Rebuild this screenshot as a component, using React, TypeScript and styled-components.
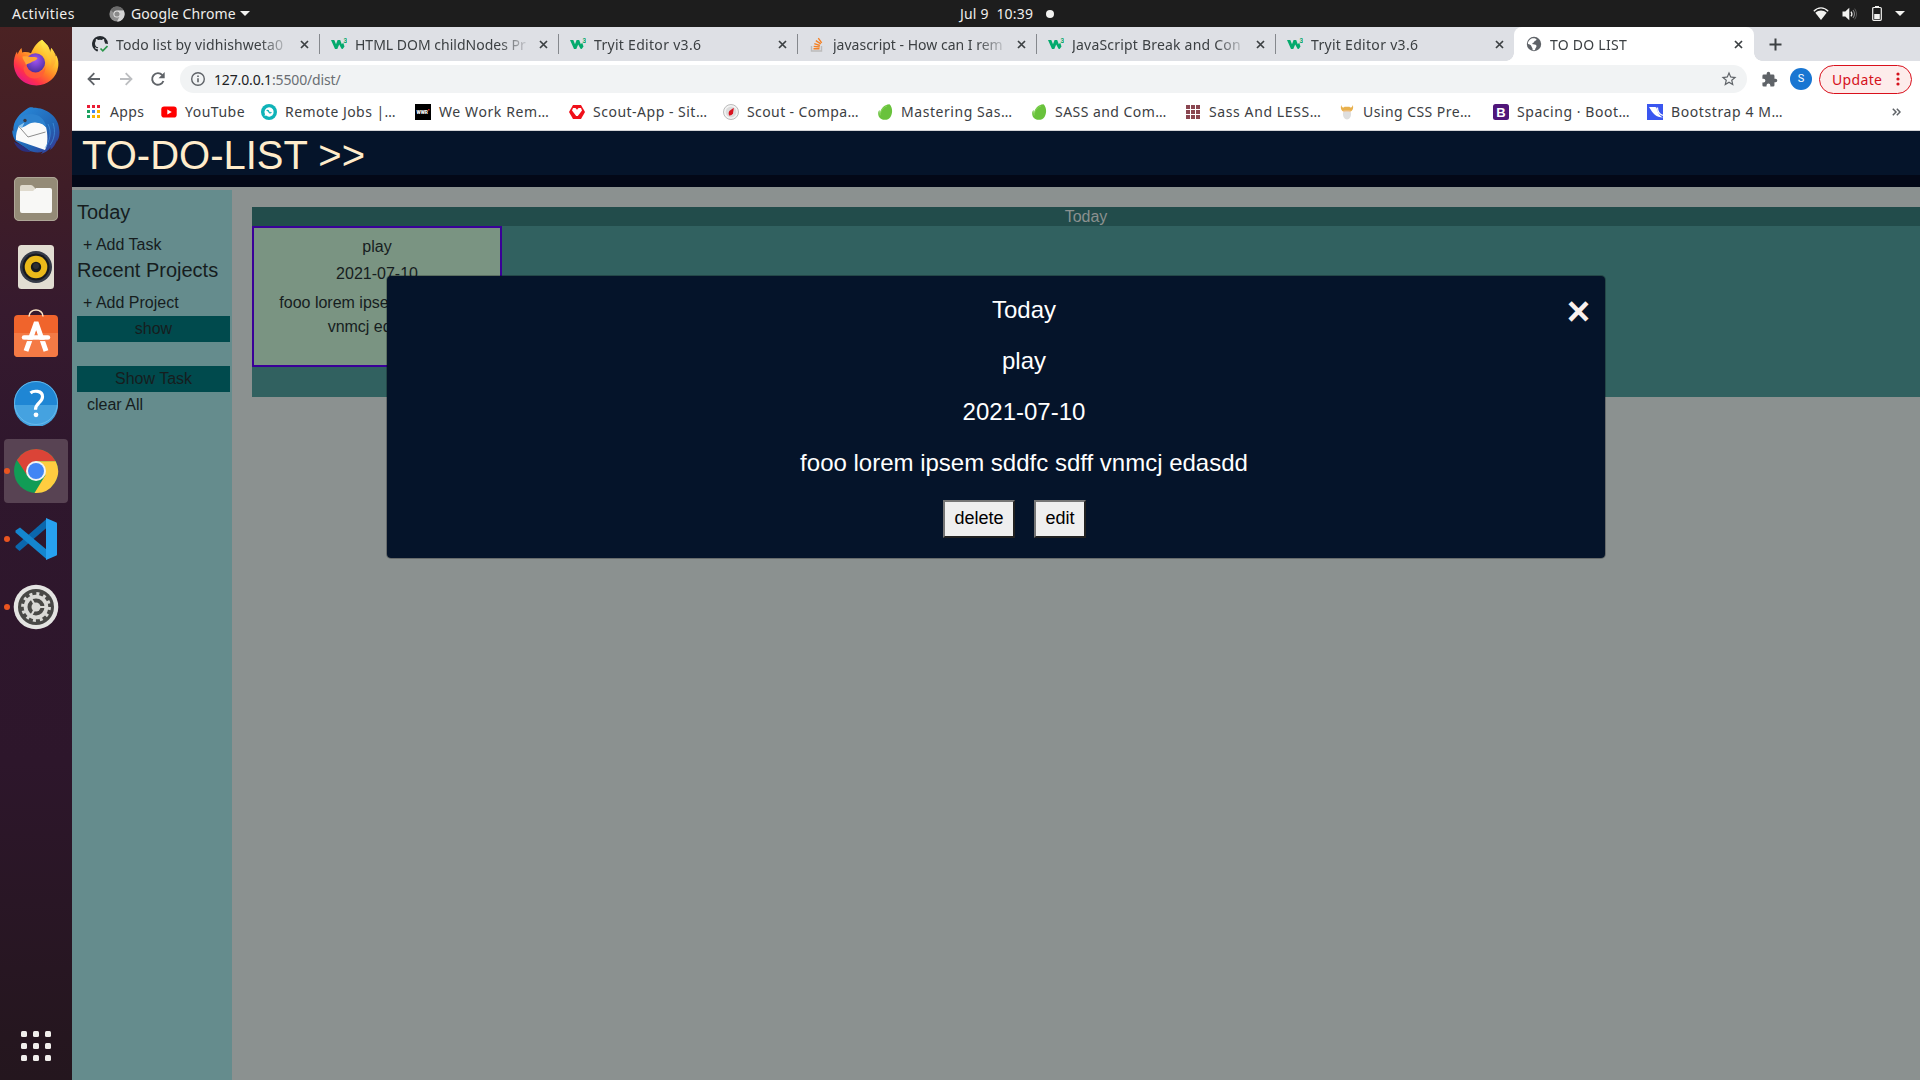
import React from "react";
import styled, { createGlobalStyle, css } from "styled-components";

const Global = createGlobalStyle`
  * { box-sizing: border-box; }
  html, body, #root { margin: 0; height: 100%; }
  body { overflow: hidden; background: #8b908f; }
`;

const uiFont = `"Noto Sans", "Open Sans", sans-serif`;
const pageFont = `"Liberation Sans", Arial, sans-serif`;

const Desktop = styled.div`
  width: 1920px;
  height: 1080px;
  display: flex;
  flex-direction: column;
  overflow: hidden;
  font-family: ${uiFont};
  font-size: 14px;
`;

/* ---------- GNOME top bar ---------- */
const TopBar = styled.header`
  height: 27px;
  flex: none;
  background: #1d1d1d;
  color: #f0eeec;
  display: grid;
  grid-template-columns: 960px 1fr auto;
  align-items: center;
  line-height: 26px;
`;
const TopLeft = styled.div`
  display: flex;
  align-items: center;
  padding-left: 12px;
`;
const AppMenu = styled.div`
  display: flex;
  align-items: center;
  gap: 6px;
  margin-left: 34px;
`;
const Clock = styled.div`
  display: flex;
  align-items: center;
  gap: 13px;
  white-space: pre;
`;
const Dot = styled.i`
  width: 8px;
  height: 8px;
  border-radius: 50%;
  background: #f2f2f0;
`;
const Tray = styled.div`
  display: flex;
  align-items: center;
  padding-right: 15px;
`;
const Label = styled.span<{ $ls?: number; $w?: number }>`
  display: block;
  white-space: pre;
  letter-spacing: ${(p) => p.$ls ?? 0}px;
  ${(p) => p.$w && css`width: ${p.$w}px;`}
`;

/* ---------- Dock ---------- */
const Body = styled.div`
  flex: 1;
  display: flex;
  min-height: 0;
`;
const Dock = styled.nav`
  width: 72px;
  flex: none;
  display: flex;
  flex-direction: column;
  padding: 2px 0 19px;
  background: linear-gradient(180deg, #4b2223 0%, #3f1d27 15%, #361a2e 27%, #2f172d 40%, #2d162b 70%, #25161f 96%, #24161e 100%);
`;
const DockItem = styled.div<{ $active?: boolean }>`
  height: 64px;
  margin: 2px 4px;
  border-radius: 4px;
  display: grid;
  grid-template-columns: 6px 1fr 6px;
  align-items: center;
  justify-items: center;
  background: ${(p) => (p.$active ? "#584353" : "transparent")};
  svg { grid-column: 2; display: block; }
`;
const RunDot = styled.i`
  width: 6px;
  height: 6px;
  border-radius: 50%;
  background: #e95420;
`;
const AppsGrid = styled.div`
  margin: auto 21px 0;
  display: grid;
  grid-template-columns: repeat(3, 6px);
  gap: 6px;
  i { height: 6px; border-radius: 1.5px; background: #f1efec; }
`;

/* ---------- Browser ---------- */
const Browser = styled.div`
  flex: 1;
  display: flex;
  flex-direction: column;
  min-width: 0;
  background: #fff;
  color: #3c4043;
`;
const TabStrip = styled.div`
  height: 34px;
  flex: none;
  display: flex;
  background: #dee0e5;
  padding-left: 8px;
`;
const TabBox = styled.div<{ $active?: boolean; $last?: boolean }>`
  width: 239px;
  display: grid;
  grid-template-columns: 16px 176px 1fr;
  column-gap: 8px;
  align-items: center;
  padding-left: 12px;
  position: relative;
  line-height: 33px;
  svg { display: block; }
  ${(p) =>
    !p.$active && !p.$last &&
    css`
      &::after {
        content: "";
        position: absolute;
        right: -1px;
        top: 7px;
        width: 1px;
        height: 20px;
        background: #85888d;
      }
    `}
  ${(p) =>
    p.$active &&
    css`
      width: 240px;
      background: #fff;
      border-radius: 8px 8px 0 0;
      &::before, &::after {
        content: "";
        position: absolute;
        bottom: 0;
        width: 8px;
        height: 8px;
      }
      &::before { left: -8px; background: radial-gradient(circle at 0 0, transparent 7.5px, #fff 8px); }
      &::after { right: -8px; background: radial-gradient(circle at 100% 0, transparent 7.5px, #fff 8px); }
    `}
`;
const TabTitle = styled.div<{ $ls: number }>`
  white-space: nowrap;
  letter-spacing: ${(p) => p.$ls}px;
  mask-image: linear-gradient(90deg, #000 calc(100% - 32px), transparent 100%);
`;
const NewTab = styled.div`
  margin-left: 15px;
  display: flex;
  align-items: center;
`;
const Toolbar = styled.div`
  height: 36px;
  flex: none;
  display: flex;
  align-items: center;
  padding-left: 12px;
`;
const NavIcon = styled.div`
  width: 20px;
  margin-right: 12px;
  height: 20px;
  svg { display: block; }
`;
const UrlPill = styled.div`
  width: 1567px;
  height: 28px;
  border-radius: 14px;
  background: #f1f3f4;
  display: flex;
  align-items: center;
  padding: 0 9px 0 10px;
  color: #6a6e73;
  b { font-weight: 400; color: #202124; }
`;
const UrlText = styled.span`
  flex: 1;
  padding-left: 8px;
  letter-spacing: -0.15px;
  line-height: 27px;
`;
const Avatar = styled.div`
  width: 22px;
  height: 22px;
  border-radius: 50%;
  background: #1976d2;
  color: #fff;
  font: 11px/22px Roboto, sans-serif;
  text-align: center;
  margin: 0 7px 0 12px;
`;
const Update = styled.div`
  width: 93px;
  height: 29px;
  border: 1px solid #d9101c;
  border-radius: 15px;
  background: #fdeceb;
  color: #d5111b;
  display: flex;
  align-items: center;
  justify-content: space-between;
  padding: 0 11px 0 12px;
`;
const Bookmarks = styled.div`
  height: 33px;
  flex: none;
  display: flex;
  align-items: center;
  padding: 0 19px 3px 14px;
`;
const Bookmark = styled.div<{ $w: number }>`
  width: ${(p) => p.$w}px;
  display: flex;
  align-items: center;
  gap: 8px;
  line-height: 18px;
  svg { display: block; flex: none; }
  span { padding-bottom: 1px; }
`;
const More = styled.div`
  margin-left: auto;
  svg { display: block; }
`;

/* ---------- To-do page ---------- */
const Page = styled.main`
  flex: 1;
  position: relative;
  display: flex;
  flex-direction: column;
  border-top: 1px solid #d3d4d7;
  background: #8b9190;
  font-family: ${pageFont};
  font-size: 16px;
  line-height: 24px;
  color: #161d1e;
`;
const Banner = styled.div`
  height: 56px;
  flex: none;
  background: #05142a;
  border-bottom: 12px solid #030817;
  color: #ffeccb;
  font-size: 40px;
  line-height: 48px;
  padding-left: 10px;
`;
const Columns = styled.div`
  flex: 1;
  display: flex;
  align-items: stretch;
`;
const Side = styled.aside`
  width: 160px;
  margin-top: 3px;
  background: #658c8d;
  padding: 8px 2px 0 5px;
`;
const SideHead = styled.div`
  font-size: 20px;
  line-height: 28px;
  margin-bottom: 6px;
  white-space: nowrap;
`;
const SideLink = styled.div<{ $indent: number }>`
  height: 24px;
  line-height: 26px;
  padding-left: ${(p) => p.$indent}px;
`;
const SideButton = styled.div<{ $top: number }>`
  height: 26px;
  line-height: 26px;
  margin: ${(p) => p.$top}px 0 0;
  background: #004a4d;
  text-align: center;
`;
const Board = styled.section`
  flex: 1;
  margin: 20px 0 0 20px;
`;
const BoardHead = styled.div`
  height: 19px;
  line-height: 19px;
  background: #224c4b;
  color: #8b9190;
  text-align: center;
`;
const BoardBody = styled.div`
  height: 171px;
  background: #316160;
`;
const Card = styled.div`
  width: 250px;
  height: 141px;
  border: 2px solid #3a0098;
  background: #7a9482;
  padding: 7px 25px 0;
  text-align: center;
`;
const CardLine = styled.div<{ $gap?: number }>`
  margin-bottom: ${(p) => p.$gap ?? 0}px;
`;
const Modal = styled.div`
  position: absolute;
  left: 314px;
  top: 144px;
  width: 1220px;
  height: 284px;
  border: 1px solid rgba(0, 0, 0, 0.25);
  border-radius: 5px;
  background: #05142a;
  background-clip: padding-box;
  color: #fff;
  font-size: 24px;
  padding: 16px 0 0 56px;
  text-align: center;
`;
const ModalLine = styled.div`
  line-height: 36px;
  margin-bottom: 15px;
`;
const Close = styled.div`
  position: absolute;
  right: 15px;
  top: 11px;
  font-size: 40px;
  line-height: 48px;
  font-weight: 700;
  color: #faf1ee;
`;
const Actions = styled.div`
  display: flex;
  gap: 19px;
  margin: 19px 0 0 500px;
`;
const ActionButton = styled.div`
  height: 38px;
  padding: 0 9.5px;
  border: 2px solid;
  border-color: #767676 #212121 #212121 #767676;
  background: #efefef;
  color: #000;
  font-size: 18px;
  line-height: 32px;
`;

/* ---------- Icons ---------- */
const Triangle = ({ w = 10 }: { w?: number }) => (
  <svg width={w} height="5" viewBox="0 0 10 5"><path d="M0 0h10L5 5z" fill="#f2f2f0" /></svg>
);
const ChromeGrey = () => (
  <svg width="16" height="16" viewBox="0 0 16 16">
    <circle cx="8" cy="8" r="7.6" fill="#8f8f8f" />
    <path d="M8 .4a7.6 7.6 0 0 1 6.8 4.2H8A3.5 3.5 0 0 0 4.7 7L1.6 3.8A7.6 7.6 0 0 1 8 .4z" fill="#6b6b6b" />
    <path d="M14.8 4.6A7.6 7.6 0 0 1 8 15.6l3.1-6A3.5 3.5 0 0 0 8 4.6z" fill="#d4d4d4" />
    <circle cx="8" cy="8" r="3.6" fill="#e4e4e4" /><circle cx="8" cy="8" r="2.6" fill="#8a8a8a" />
  </svg>
);
const TrayIcon = styled.svg<{ $l?: number; $r?: number }>`
  display: block;
  margin: 0 ${(p) => p.$r ?? 0}px 0 ${(p) => p.$l ?? 0}px;
`;
const Wifi = () => (
  <TrayIcon width="16" height="14" viewBox="0 0 16 14">
    <path d="M.8 4.2C5-.2 11-.2 15.200 4.200" fill="none" stroke="#f2f2f0" strokeWidth="1.3" />
    <path d="M2.300 5.700C5.700 2.600 10.300 2.600 13.700 5.700L8 13z" fill="#f2f2f0" />
  </TrayIcon>
);
const Volume = () => (
  <TrayIcon $l={13} width="16" height="14" viewBox="0 0 16 14">
    <path d="M.5 4.500h2.800L7.300.8v12.400L3.300 9.500H.5z" fill="#f2f2f0" />
    <path d="M9 4.600q1.800 2.400 0 4.800" fill="none" stroke="#f2f2f0" strokeWidth="1.300" />
    <path d="M11 3q3 4 0 8" fill="none" stroke="#8a8a8a" strokeWidth="1.100" />
    <path d="M12.700 1.600q3.600 5.400 0 10.800" fill="none" stroke="#5c5c5c" strokeWidth="1" />
  </TrayIcon>
);
const Battery = () => (
  <TrayIcon $l={14} $r={13} width="10" height="15" viewBox="0 0 10 15">
    <path d="M3 0h4v1.500H3z" fill="#f2f2f0" />
    <rect x=".7" y="1.500" width="8.600" height="12.800" rx="1" fill="none" stroke="#f2f2f0" strokeWidth="1.200" />
    <path d="M2.200 8h5.600v5H2.200z" fill="#f2f2f0" />
  </TrayIcon>
);

const Firefox = () => (
  <svg width="48" height="48" viewBox="0 0 48 48">
    <defs>
      <linearGradient id="ff1" x1=".85" y1=".1" x2=".2" y2=".95">
        <stop offset="0" stopColor="#fff14d" /><stop offset=".3" stopColor="#ffbd2e" />
        <stop offset=".55" stopColor="#ff7a26" /><stop offset=".8" stopColor="#ff2f4c" /><stop offset="1" stopColor="#e3178a" />
      </linearGradient>
      <radialGradient id="ff2" cx=".5" cy=".35" r=".65">
        <stop offset="0" stopColor="#a355f5" /><stop offset="1" stopColor="#4c2f9e" />
      </radialGradient>
      <linearGradient id="ff3" x1="0" y1="0" x2="0" y2="1">
        <stop offset="0" stopColor="#fff04a" /><stop offset="1" stopColor="#ff9a2b" stopOpacity=".7" />
      </linearGradient>
    </defs>
    <path d="M30 .8C33 4 36 6 37 9c.6 1.5 1 3 1.2 4.6l1-4.6c3 3 3.6 6 4 8.500l1.200-1C46.500 20.500 46.600 24 46.300 27 45 38.500 35.700 46.400 24.500 46.400 12 46.400 2.500 37.500 1.800 25.500 1.600 20.500 3 15.500 5 12.500l.6 3C6.500 12.500 8 10.500 9.500 9l.7 4.500c3.300-.8 6.300-.3 8.800.8C22 7.500 25 3.600 30 .8z" fill="url(#ff1)" />
    <circle cx="23.500" cy="23.800" r="9.600" fill="url(#ff2)" />
    <path d="M10.500 17.500c3.500-.8 5.500.2 8.500.5 2.400.3 4.300-.5 6.500 1-1 2.800-4.600 3-6.500 4.600-2 1.600-4.300.9-4.800 2.800-1.200-4.400-3.700-5.600-3.700-8.900z" fill="#ffa436" />
    <path d="M30 .8c-2 5 .5 8.800 4.500 12.500 5 4.700 5.800 12 2.500 17.500 6-3 8-10 6.500-15.500l-4.300-6.300-1 4.600C37.600 8.500 33.500 5 30 .8z" fill="url(#ff3)" />
    <path d="M14.500 25.500c.8 5.700 4.600 8.500 9.500 8.500 4.500 0 8-2.500 9.300-6.500.5 8-5 12-11 12-6 0-11-5-10.800-11z" fill="#ff5d3a" opacity=".75" />
  </svg>
);
const Thunderbird = () => (
  <svg width="48" height="48" viewBox="0 0 48 48">
    <defs><linearGradient id="tb" x1="0" y1="0" x2="1" y2="1"><stop offset="0" stopColor="#2a8fe0" /><stop offset=".6" stopColor="#2166b5" /><stop offset="1" stopColor="#3a2f8f" /></linearGradient></defs>
    <path d="M14 2.500C17 .3 19 0 21.500.7 34 .7 47.500 9 47.500 25c0 5-1.500 8-3 10l.5-2.500c-1 4.500-4 8.500-7 10.500l1-3c-3 4-7 6-10 7l2-2.500c-5 2-11 .5-14-1L3.500 34C1.500 31 0 27 .3 23l1 1.500C1 19 2.500 14 5.500 10.500 8 6.500 11 5 14 2.500z" fill="url(#tb)" />
    <path d="M8 17C5 22 3.500 28 4 33l29 10c3.500-6 2.500-17 1-23L31 17c-8-3-15-2-23 0z" fill="#fafafa" />
    <path d="M6.500 19L16 30l17.500-5" fill="none" stroke="#8d8d8d" strokeWidth="1" />
    <path d="M5 18C6 10 12 7 19 7c8 0 14 5 15.500 14-4-5-8-5.500-12-5.500-5 0-7 3-12.500 5z" fill="#2d82cf" />
    <path d="M6.500 19l6-3.500L10 21z" fill="#8fc7ef" />
    <circle cx="13" cy="13.500" r="1.700" fill="#3a3a44" />
    <path d="M2 35l9 4 8 6C9 46 4 40 2 35z" fill="#2b2f7e" />
    <path d="M36 17c4 8 2 17-3 24M41 16c3 9 1 17-3 22" fill="none" stroke="#4aa1ea" strokeWidth="1" opacity=".6" />
  </svg>
);
const Files = () => (
  <svg width="46" height="46" viewBox="0 0 46 46">
    <rect x="1" y="1" width="44" height="44" rx="5" fill="#948b77" />
    <rect x="1.500" y="1.500" width="43" height="43" rx="4.500" fill="none" stroke="#aea697" />
    <path d="M7 11q0-2 2-2h9q1.500 0 2.500 1.500L22 12v6H7z" fill="#dfdacd" />
    <path d="M7 15h13l3-3h14q2 0 2 2v21q0 2-2 2H9q-2 0-2-2z" fill="#f8f8f6" />
  </svg>
);
const Rhythmbox = () => (
  <svg width="40" height="46" viewBox="0 0 40 46">
    <rect x="2" y="1" width="36" height="44" rx="3.500" fill="#e2ddd2" />
    <circle cx="20" cy="23" r="16" fill="#353a47" /><circle cx="20" cy="23" r="13.500" fill="#17191f" />
    <circle cx="20" cy="23" r="11.300" fill="#eab91a" /><circle cx="20" cy="23" r="5.200" fill="#17191c" />
    <circle cx="20" cy="22" r="3" fill="#2c2e33" />
  </svg>
);
const Software = () => (
  <svg width="46" height="54" viewBox="0 0 46 54">
    <rect x="1" y="7" width="44" height="42" rx="4" fill="#f0642c" />
    <path d="M1 25h44v20q0 4-4 4H5q-4 0-4-4z" fill="#f47a45" />
    <path d="M16 8.500C16-.200 30-.200 30 8.500" fill="none" stroke="#fbe3c4" strokeWidth="1.600" />
    <path d="M13 43L22.800 16h.8L33 43" fill="none" stroke="#fff" strokeWidth="5" />
    <path d="M11 29.500h24" stroke="#fff" strokeWidth="4.500" strokeLinecap="round" />
    <path d="M9 32.500h28" stroke="#f47a45" strokeWidth="1.200" />
  </svg>
);
const Help = () => (
  <svg width="46" height="46" viewBox="0 0 46 46">
    <circle cx="23" cy="23" r="22" fill="#1f86d4" /><path d="M1 25a22 22 0 0 0 44 0z" fill="#45a2e0" />
    <circle cx="23" cy="23" r="21.500" fill="none" stroke="#6cbcec" strokeWidth=".9" />
    <path d="M17.500 13c3-2.600 12-2.800 12 3.700 0 6-7 6-7 13" fill="none" stroke="#fff" strokeWidth="3.200" />
    <circle cx="23" cy="34.800" r="2.400" fill="#fff" />
  </svg>
);
const Chrome = () => (
  <svg width="46" height="46" viewBox="0 0 46 46">
    <circle cx="23" cy="23" r="22" fill="#119c56" />
    <path d="M3.950 12A22 22 0 0 1 42.700 13.200L23 13 13.600 26.500z" fill="#db4437" />
    <path d="M42.700 13.200A22 22 0 0 1 21.500 45L32.500 27 23 13.200z" fill="#ffcd40" />
    <circle cx="23" cy="23" r="10" fill="#f3f3f3" /><circle cx="23" cy="23" r="8" fill="#4285f4" />
  </svg>
);
const VSCode = () => (
  <svg width="44" height="44" viewBox="0 0 44 44">
    <path d="M1.500 30.500L5.500 34 33 10.500V1.500L1.500 29z" fill="#0b67ad" />
    <path d="M1.500 13.500L6 10.500 33 33v9.500L1.500 15.500z" fill="#1486cf" />
    <path d="M32 1l10.500 4.500q.5.300.5 1v31q0 .700-.5 1L32 43z" fill="#27a1f0" />
  </svg>
);
const Settings = () => (
  <svg width="46" height="46" viewBox="0 0 46 46">
    <circle cx="23" cy="23" r="22.300" fill="#e4e4e2" /><circle cx="23" cy="23" r="18" fill="#484846" />
    <circle cx="23" cy="23" r="13.300" fill="none" stroke="#d9d9d6" strokeWidth="3.200" strokeDasharray="3 3.960" />
    <circle cx="23" cy="23" r="10.400" fill="none" stroke="#d9d9d6" strokeWidth="3.800" />
    <circle cx="23" cy="23" r="4.500" fill="#d9d9d6" />
    <path d="M23 23h10M23 23l-5-8.700M23 23l-5 8.700" stroke="#d9d9d6" strokeWidth="2" />
  </svg>
);

const CloseX = () => (
  <svg width="9" height="9" viewBox="0 0 9 9"><path d="M1 1l7 7M8 1L1 8" stroke="#3c4043" strokeWidth="1.700" /></svg>
);
const GitHub = () => (
  <svg width="16" height="16" viewBox="0 0 16 16">
    <path d="M8 0a8 8 0 0 0-3 15.400c.5 0 .9-.2.9-.6v-1.500c-2 .3-2.700-.8-3-1.700l.2-.3c1 .1 1.200 1.300 2.800 1l.3-1C4.300 10.900 3 9.800 3 7.400c0-.9.400-1.700.9-2.300-.2-.7-.1-1.500.1-2 .9 0 1.500.4 2.100.8a7.300 7.300 0 0 1 3.800 0c.6-.4 1.200-.8 2.100-.8.200.5.300 1.300.1 2 .5.600.9 1.400.9 2.300L16 8a8 8 0 0 0-8-8z" fill="#24292e" />
    <path d="M8.500 12.500l2.300 2.300L15.500 10" fill="none" stroke="#2c974b" strokeWidth="1.700" />
  </svg>
);
const W3 = () => (
  <svg width="16" height="16" viewBox="0 0 16 16">
    <path d="M0 4h3.300L5 8.200 6.600 4h2.600l1.600 4.200 1.400-1.400 1.300 3.700L11.700 13l-1.200-.3L8.200 8.500 6.300 13H4z" fill="#04aa6d" />
    <text x="12.400" y="7" fontSize="6.500" fontWeight="700" fill="#04aa6d" fontFamily="Roboto, sans-serif">3</text>
  </svg>
);
const StackOverflow = () => (
  <svg width="16" height="16" viewBox="0 0 16 16">
    <path d="M2.500 10v5h10v-5" fill="none" stroke="#bcbbbb" strokeWidth="1.400" />
    <path d="M4.500 12.800h6M4.700 10.400l6 .6M5.300 7.700l5.600 1.800M6.800 4.700l5 3.200M9.300 2.200l3.400 4.700" stroke="#f48024" strokeWidth="1.400" />
  </svg>
);
const Globe = () => (
  <svg width="16" height="16" viewBox="0 0 16 16">
    <circle cx="8" cy="8" r="7.200" fill="#5f6368" />
    <path d="M6.500 2.200C8.500 2 11 2.600 10.500 3.700 10 5 8.300 4.400 8.300 5.800c0 1-2 .8-2 2 0 1 3.700.2 4.200 2C10.800 11.500 9 12 9 14c-1 .3-2 .200-2.400 0 .3-2-1-2.500-1.300-4C5 8.800 3.500 8.500 2 8c-.3-2.500 2-5.300 4.500-5.800z" fill="#fff" />
  </svg>
);

const Grid = ({ colors, size }: { colors: string[]; size: number }) => (
  <svg width="16" height="16" viewBox="0 0 16 16">
    {colors.map((c, i) => (
      <rect key={i} x={1 + (i % 3) * 5} y={1 + Math.floor(i / 3) * 5} width={size} height={size} fill={c} />
    ))}
  </svg>
);
const YouTube = () => (
  <svg width="16" height="16" viewBox="0 0 16 16"><rect x=".3" y="2.500" width="15.400" height="11" rx="2.800" fill="#f00" /><path d="M6.300 5.500v5L10.800 8z" fill="#fff" /></svg>
);
const Remote = () => (
  <svg width="16" height="16" viewBox="0 0 16 16"><circle cx="8" cy="8" r="8" fill="#0fb3b8" /><path d="M8 3.300A4.700 4.700 0 1 1 5 11.600L3.500 12l.5-1.800A4.700 4.700 0 0 1 8 3.300z" fill="#fff" /><path d="M5.800 7c1-1.500 1.700 0 2.200 1s1.400 1.500 2.300 0" fill="none" stroke="#0fb3b8" strokeWidth="1.300" /></svg>
);
const Wwr = () => (
  <svg width="16" height="16" viewBox="0 0 16 16"><path d="M0 0h16v16H0z" /><text x="1.500" y="10.300" fontSize="5.500" fontWeight="900" fill="#fff" textLength="11.500" lengthAdjust="spacingAndGlyphs" fontFamily="Roboto, sans-serif">WWR</text><path d="M13.200 5h1.300v1.500h-1.300z" fill="#e33" /></svg>
);
const ScoutApp = () => (
  <svg width="16" height="16" viewBox="0 0 16 16"><path d="M4 1h8l4 7-4 7H4L0 8z" fill="#f0101a" /><path d="M4 4h2.500L8 5.800 9.500 4H12l1 2.500L8.800 12H7.200L3 6.500z" fill="#fff" /></svg>
);
const Scout = () => (
  <svg width="16" height="16" viewBox="0 0 16 16"><circle cx="8" cy="8" r="7.500" fill="#f4f4f4" stroke="#aaa" strokeWidth=".8" /><circle cx="8" cy="8" r="5.400" fill="#dcdcdc" /><path d="M10.800 3.800L10 9.500Q8.500 12 6 11.500 5 9 6.300 7z" fill="#d9121f" /></svg>
);
const Envato = () => (
  <svg width="16" height="16" viewBox="0 0 16 16"><path d="M12.500.3C15.500 3 16 9 13.500 13 11 17 4 16.800 1.800 12.500.8 10 1 7.500 2.500 6l.4 4C3.500 5 7 .5 12.500.3z" fill="#69c23c" /><path d="M3 11.500C3.500 6 6.500 3 10 2" fill="none" stroke="#8fdc62" strokeWidth=".8" /></svg>
);
const Viking = () => (
  <svg width="16" height="16" viewBox="0 0 16 16"><path d="M2.200 1C3 4 5 4 5.500 2.800h5C11 4 13 4 13.800 1 15 5 13 6.500 12 7.500H4C3 6.500 1 5 2.200 1z" fill="#e8b04c" /><path d="M4.500 6.500h7V9h-7z" fill="#edc9a2" /><path d="M4 8.500l2.500-.7h3l2.500.7c.5 4-1.500 7-4 7s-4.500-3-4-7z" fill="#dedede" /></svg>
);
const BootstrapB = () => (
  <svg width="16" height="16" viewBox="0 0 16 16"><rect width="16" height="16" rx="2.500" fill="#50167a" /><text x="8" y="12.700" textAnchor="middle" fontSize="13" fontWeight="700" fill="#fff" fontFamily="Liberation Sans, sans-serif">B</text></svg>
);
const Mdb = () => (
  <svg width="16" height="16" viewBox="0 0 16 16"><path d="M0 0h16v16H0z" fill="#3a56f0" /><path d="M2 3h6c2 0 1.800 2 2.500 4s2.500 5 5.500 6.500C9 13.500 6 9.500 2 3z" fill="#fff" /><path d="M10.500 3.500c0 4 2.500 7 5.500 8" fill="none" stroke="#fff" strokeWidth="1.200" /></svg>
);

const tabs = [
  { icon: <GitHub />, title: "Todo list by vidhishweta0", ls: 0.1 },
  { icon: <W3 />, title: "HTML DOM childNodes Pr", ls: 0 },
  { icon: <W3 />, title: "Tryit Editor v3.6", ls: 0.3 },
  { icon: <StackOverflow />, title: "javascript - How can I rem", ls: 0 },
  { icon: <W3 />, title: "JavaScript Break and Con", ls: 0.2 },
  { icon: <W3 />, title: "Tryit Editor v3.6", ls: 0.3 },
  { icon: <Globe />, title: "TO DO LIST", ls: 0.25 },
];

const appColors = ["#ea1c35", "#ea1c35", "#ea1c35", "#1aa260", "#4285f4", "#fbb400", "#1aa260", "#fbb400", "#fbb400"];
const bookmarks = [
  { icon: <Grid colors={appColors} size={3} />, title: "Apps", w: 75, ls: 0.4 },
  { icon: <YouTube />, title: "YouTube", w: 100, ls: 0.5 },
  { icon: <Remote />, title: "Remote Jobs |…", w: 154, ls: 0.45 },
  { icon: <Wwr />, title: "We Work Rem…", w: 154, ls: 0.6 },
  { icon: <ScoutApp />, title: "Scout-App - Sit…", w: 154, ls: 0.5 },
  { icon: <Scout />, title: "Scout - Compa…", w: 154, ls: 0.4 },
  { icon: <Envato />, title: "Mastering Sas…", w: 154, ls: 0.55 },
  { icon: <Envato />, title: "SASS and Com…", w: 154, ls: 0.45 },
  { icon: <Grid colors={Array(9).fill("#8a4650")} size={4} />, title: "Sass And LESS…", w: 154, ls: 0.6 },
  { icon: <Viking />, title: "Using CSS Pre…", w: 154, ls: 0.45 },
  { icon: <BootstrapB />, title: "Spacing · Boot…", w: 154, ls: 0.55 },
  { icon: <Mdb />, title: "Bootstrap 4 M…", w: 154, ls: 0.6 },
];

const dock = [
  { icon: <Firefox /> },
  { icon: <Thunderbird /> },
  { icon: <Files /> },
  { icon: <Rhythmbox /> },
  { icon: <Software /> },
  { icon: <Help /> },
  { icon: <Chrome />, running: true, active: true },
  { icon: <VSCode />, running: true },
  { icon: <Settings />, running: true },
];

export default function App() {
  return (
    <Desktop>
      <Global />
      <TopBar>
        <TopLeft>
          <Label $w={63} $ls={0.45}>Activities</Label>
          <AppMenu>
            <ChromeGrey />
            <Label $w={103} $ls={0.1}>Google Chrome</Label>
            <Triangle />
          </AppMenu>
        </TopLeft>
        <Clock>
          <Label $w={73} $ls={0.2}>Jul 9  10:39</Label>
          <Dot />
        </Clock>
        <Tray>
          <Wifi />
          <Volume />
          <Battery />
          <Triangle />
        </Tray>
      </TopBar>
      <Body>
        <Dock>
          {dock.map((d, i) => (
            <DockItem key={i} $active={d.active}>
              {d.running && <RunDot />}
              {d.icon}
            </DockItem>
          ))}
          <AppsGrid>
            {Array.from({ length: 9 }, (_, i) => <i key={i} />)}
          </AppsGrid>
        </Dock>
        <Browser>
          <TabStrip>
            {tabs.map((t, i) => (
              <TabBox key={i} $active={i === 6} $last={i === 5}>
                {t.icon}
                <TabTitle $ls={t.ls}>{t.title}</TabTitle>
                <CloseX />
              </TabBox>
            ))}
            <NewTab>
              <svg width="13" height="13" viewBox="0 0 13 13"><path d="M6.500.5v12M.5 6.500h12" stroke="#3c4043" strokeWidth="2" /></svg>
            </NewTab>
          </TabStrip>
          <Toolbar>
            <NavIcon>
              <svg width="20" height="20" viewBox="0 0 20 20"><path d="M16 10H5M10.300 4.200L4.500 10l5.800 5.800" fill="none" stroke="#5f6368" strokeWidth="1.800" /></svg>
            </NavIcon>
            <NavIcon>
              <svg width="20" height="20" viewBox="0 0 20 20"><path d="M4 10h11M9.700 4.200l5.800 5.800-5.800 5.800" fill="none" stroke="#bcbec1" strokeWidth="1.800" /></svg>
            </NavIcon>
            <NavIcon>
              <svg width="20" height="20" viewBox="0 0 20 20"><path d="M15.400 12A5.800 5.800 0 1 1 14.300 6.100" fill="none" stroke="#5f6368" strokeWidth="1.900" /><path d="M16.700 3v6.200h-6.200z" fill="#5f6368" /></svg>
            </NavIcon>
            <UrlPill>
              <svg width="16" height="16" viewBox="0 0 16 16"><circle cx="8" cy="8" r="6.300" fill="none" stroke="#5f6368" strokeWidth="1.400" /><path d="M8 7.200v4M8 4.400V6" stroke="#5f6368" strokeWidth="1.600" /></svg>
              <UrlText><b>127.0.0.1</b>:5500/dist/</UrlText>
              <svg width="18" height="18" viewBox="0 0 24 24"><path d="M22 9.240l-7.190-.62L12 2 9.190 8.630 2 9.240l5.460 4.730L5.820 21 12 17.270 18.180 21l-1.630-7.030L22 9.240zM12 15.400l-3.760 2.270 1-4.280-3.320-2.880 4.380-.38L12 6.100l1.710 4.040 4.380.38-3.320 2.880 1 4.280L12 15.400z" fill="#5f6368" /></svg>
            </UrlPill>
            <TrayIcon $l={14} width="17" height="17" viewBox="0 0 24 24"><path d="M20.500 11H19V7a2 2 0 0 0-2-2h-4V3.500a2.500 2.500 0 0 0-5 0V5H4a2 2 0 0 0-2 2v3.800h1.500a2.700 2.700 0 0 1 0 5.400H2V20a2 2 0 0 0 2 2h3.800v-1.500a2.700 2.700 0 0 1 5.400 0V22H17a2 2 0 0 0 2-2v-4h1.500a2.500 2.500 0 0 0 0-5z" fill="#5f6368" /></TrayIcon>
            <Avatar>S</Avatar>
            <Update>
              <Label $ls={0.35}>Update</Label>
              <svg width="4" height="14" viewBox="0 0 4 14"><circle cx="2" cy="2" r="1.600" fill="#d5111b" /><circle cx="2" cy="7" r="1.600" fill="#d5111b" /><circle cx="2" cy="12" r="1.600" fill="#d5111b" /></svg>
            </Update>
          </Toolbar>
          <Bookmarks>
            {bookmarks.map((b) => (
              <Bookmark key={b.title} $w={b.w}>
                {b.icon}
                <Label $ls={b.ls}>{b.title}</Label>
              </Bookmark>
            ))}
            <More>
              <svg width="9" height="8" viewBox="0 0 9 8"><path d="M.8.800L4 4 .8 7.200M4.800.800L8 4 4.800 7.200" fill="none" stroke="#5f6368" strokeWidth="1.500" /></svg>
            </More>
          </Bookmarks>
          <Page>
            <Banner>TO-DO-LIST &gt;&gt;</Banner>
            <Columns>
              <Side>
                <SideHead>Today</SideHead>
                <SideLink $indent={6}>+ Add Task</SideLink>
                <SideHead>Recent Projects</SideHead>
                <SideLink $indent={6}>+ Add Project</SideLink>
                <SideButton $top={2}>show</SideButton>
                <SideButton $top={24}>Show Task</SideButton>
                <SideLink $indent={10}>clear All</SideLink>
              </Side>
              <Board>
                <BoardHead>Today</BoardHead>
                <BoardBody>
                  <Card>
                    <CardLine $gap={3}>play</CardLine>
                    <CardLine $gap={5}>2021-07-10</CardLine>
                    <CardLine>fooo lorem ipsem sddfc sdff vnmcj edasdd</CardLine>
                  </Card>
                </BoardBody>
              </Board>
            </Columns>
            <Modal>
              <Close>×</Close>
              <ModalLine>Today</ModalLine>
              <ModalLine>play</ModalLine>
              <ModalLine>2021-07-10</ModalLine>
              <ModalLine>fooo lorem ipsem sddfc sdff vnmcj edasdd</ModalLine>
              <Actions>
                <ActionButton>delete</ActionButton>
                <ActionButton>edit</ActionButton>
              </Actions>
            </Modal>
          </Page>
        </Browser>
      </Body>
    </Desktop>
  );
}
